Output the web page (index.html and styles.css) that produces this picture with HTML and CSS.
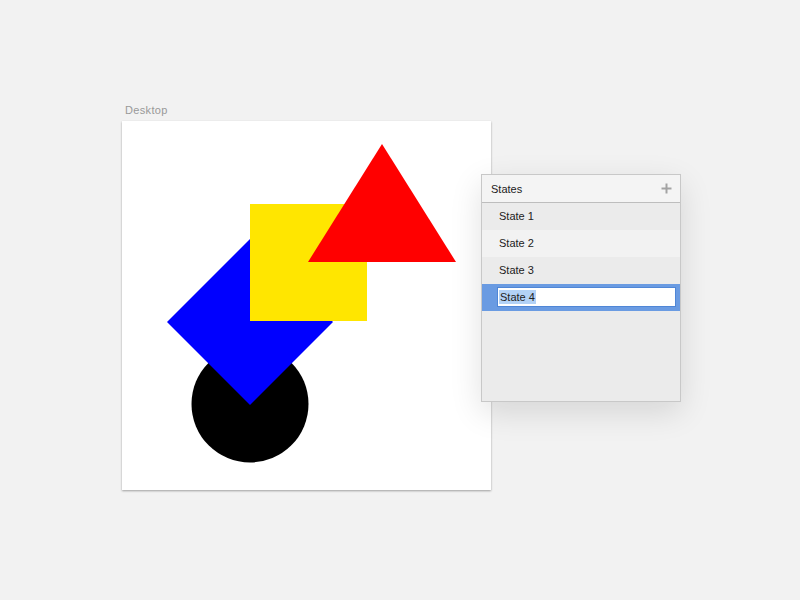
FILE: index.html
```html
<!DOCTYPE html>
<html lang="en">
<head>
    <meta charset="UTF-8">
    <meta name="viewport" content="width=device-width, initial-scale=1.0">
    <title>States</title>
    <link rel="stylesheet" href="styles.css">
</head>
<body>
    <div class="stage">
        <div class="artboard-label">Desktop</div>
        <div class="artboard">
            <svg class="canvas" width="369" height="369" viewBox="0 0 369 369">
                <circle cx="128" cy="283" r="58.5" fill="#000"/>
                <polygon points="45,201 128,118 211,201 128,284" fill="#0000ff"/>
                <rect x="128" y="83" width="117" height="117" fill="#ffe600"/>
                <polygon points="186,141 260,23 334,141" fill="#ff0000"/>
            </svg>
        </div>
    </div>

    <div class="states-panel">
        <div class="panel-header">
            <span class="panel-title">States</span>
            <svg class="add-icon" width="11" height="11" viewBox="0 0 11 11">
                <path d="M5.5 0.5v10M0.5 5.5h10" stroke="#a3a3a3" stroke-width="2"/>
            </svg>
        </div>
        <ul class="state-list">
            <li class="state-item">State 1</li>
            <li class="state-item alt">State 2</li>
            <li class="state-item">State 3</li>
            <li class="state-item editing">
                <div class="state-input"><span class="selected-text">State 4</span></div>
            </li>
        </ul>
    </div>
</body>
</html>
```

FILE: styles.css
```css
body {
    margin: 0;
    width: 800px;
    height: 600px;
    background: #f2f2f2;
    font-family: 'Liberation Sans', Arial, sans-serif;
    position: relative;
    overflow: hidden;
}

.stage {
    padding: 103px 0 0 122px;
}

.artboard-label {
    font-size: 11px;
    letter-spacing: 0.35px;
    color: #999;
    padding-left: 3px;
    height: 18px;
    line-height: 14px;
}

.artboard {
    width: 369px;
    height: 369px;
    background: white;
    box-shadow: 0 1px 2px rgba(0, 0, 0, 0.35);
}

.canvas {
    display: block;
}

.states-panel {
    position: absolute;
    left: 481px;
    top: 174px;
    width: 198px;
    height: 226px;
    border: 1px solid #c8c8c8;
    background: #ebebeb;
    box-shadow: 0 10px 30px rgba(0, 0, 0, 0.12);
    display: flex;
    flex-direction: column;
}

.panel-header {
    height: 27px;
    background: #f4f4f4;
    border-bottom: 1px solid #bdbdbd;
    display: flex;
    align-items: center;
    justify-content: space-between;
    padding: 0 9px 0 9px;
}

.panel-title {
    font-size: 11px;
    color: #222;
}

.add-icon {
    display: block;
    margin-right: -1px;
}

.state-list {
    list-style: none;
    margin: 0;
    padding: 0;
}

.state-item {
    height: 27px;
    line-height: 27px;
    padding-left: 17px;
    font-size: 11px;
    color: #222;
    background: #ebebeb;
}

.state-item.alt {
    background: #f2f2f2;
}

.state-item.editing {
    background: #6a9be2;
    padding: 3px 4px 4px 15px;
    box-sizing: border-box;
}

.state-input {
    height: 20px;
    box-sizing: border-box;
    background: white;
    border: 1px solid #4f86d6;
    padding-left: 1px;
    line-height: 18px;
}

.selected-text {
    background: #b3d2f6;
    padding: 1px 1px;
}
```
